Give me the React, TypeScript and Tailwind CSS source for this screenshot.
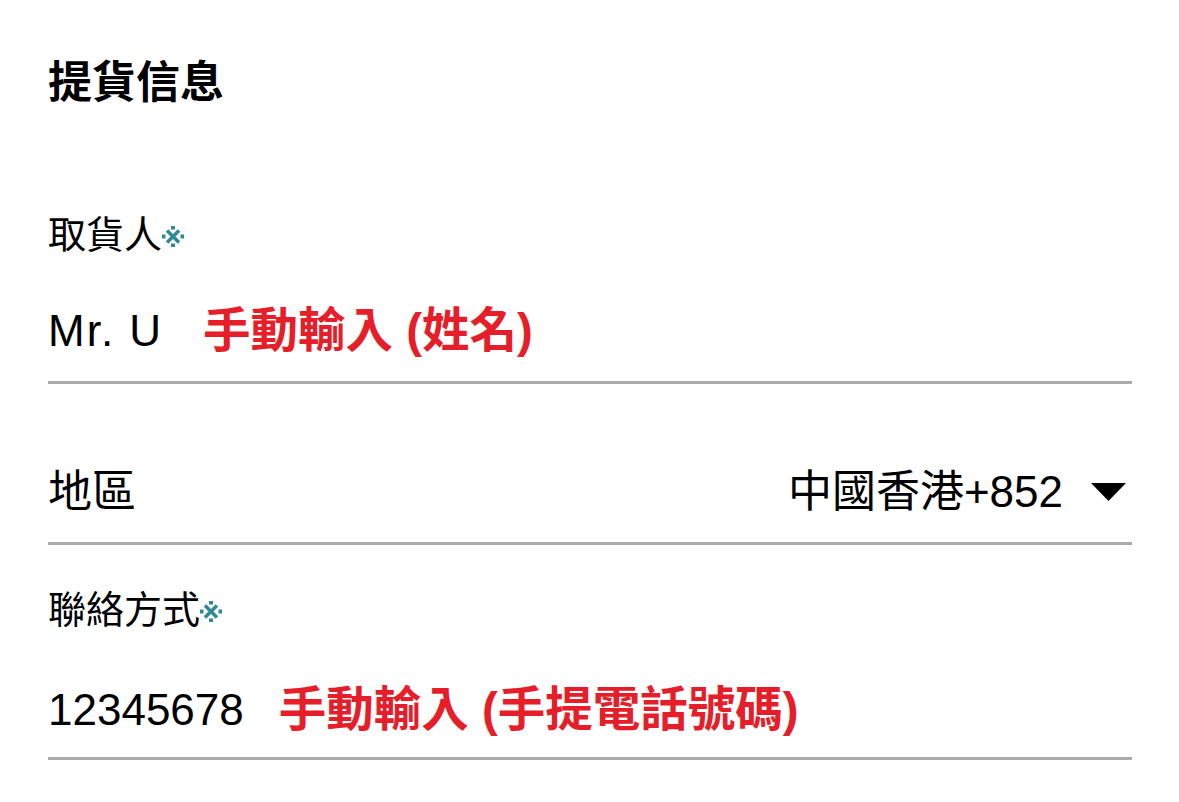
const font = { fontFamily: '"Liberation Sans", "Noto Sans CJK TC", sans-serif' }

// ※ drawn so its weight matches the reference
const Req = () => (
  <svg width="22" height="21" viewBox="0 0 22 21" className="inline-block align-[1px]">
    <g stroke="#2f8a95" strokeWidth="3.6">
      <line x1="5" y1="4.5" x2="17" y2="16.5" />
      <line x1="17" y1="4.5" x2="5" y2="16.5" />
    </g>
    <g fill="#2f8a95">
      <rect x="9" y="0" width="4" height="3.5" />
      <rect x="9" y="17.5" width="4" height="3.5" />
      <rect x="0" y="8.5" width="3.5" height="4" />
      <rect x="18.5" y="8.5" width="3.5" height="4" />
    </g>
  </svg>
)

const Note = ({ children, className }: { children: React.ReactNode; className?: string }) => (
  <span className={`font-bold text-[#e61e2a] text-[47.5px] ${className}`}>{children}</span>
)

export default function App() {
  return (
    <div className="w-[1179px] h-[802px] bg-white text-black overflow-hidden" style={font}>
      <div className="pl-[48px] pr-[47px]">
        <h1 className="h-[166px] flex items-center text-[44px] font-bold">提貨信息</h1>

        <div className="h-[115px] pt-[44px] text-[38px] leading-[50px]">
          取貨人<Req />
        </div>
        <div className="h-[103px] flex items-center border-b-[3px] border-[#aaaaaa] text-[44px] leading-none">
          <span className="tracking-[2px]">Mr. U</span>
          <Note className="ml-[40px]">手動輸入 (姓名)</Note>
        </div>

        <div className="h-[161px] flex items-center justify-between pt-[58px] border-b-[3px] border-[#aaaaaa] text-[44px] leading-none">
          <span>地區</span>
          <div className="flex items-center">
            <span>中國香港+852</span>
            <svg width="35" height="18" viewBox="0 0 35 18" className="ml-[28px] mr-[6px]">
              <polygon points="0,0 35,0 17.5,18" fill="#000" />
            </svg>
          </div>
        </div>

        <div className="h-[118px] pt-[40px] text-[38px] leading-[50px]">
          聯絡方式<Req />
        </div>
        <div className="h-[97px] flex items-center border-b-[3px] border-[#aaaaaa] text-[44px] leading-none">
          <span>12345678</span>
          <Note className="ml-[35px]">手動輸入 (手提電話號碼)</Note>
        </div>
      </div>
    </div>
  )
}
